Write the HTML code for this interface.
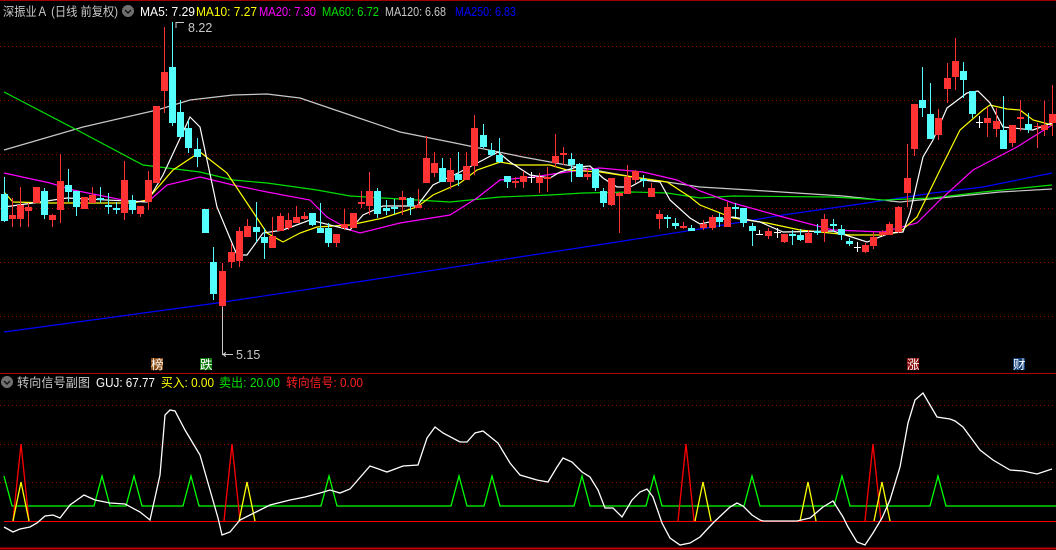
<!DOCTYPE html>
<html><head><meta charset="utf-8"><style>
html,body{margin:0;padding:0;background:#000;width:1056px;height:550px;overflow:hidden}
svg{display:block}
text{font-family:"Liberation Sans","Noto Sans CJK SC",sans-serif;font-size:12.5px}
</style></head><body>
<svg width="1056" height="550" viewBox="0 0 1056 550" xmlns="http://www.w3.org/2000/svg" shape-rendering="crispEdges">
<rect width="1056" height="550" fill="#000"/>
<line x1="0" y1="0.5" x2="1056" y2="0.5" stroke="#a00000"/>
<g stroke="#a00000" stroke-dasharray="1,3">
<line x1="0" y1="46.5" x2="1056" y2="46.5"/><line x1="0" y1="100.5" x2="1056" y2="100.5"/>
<line x1="0" y1="154.5" x2="1056" y2="154.5"/><line x1="0" y1="208.5" x2="1056" y2="208.5"/>
<line x1="0" y1="262.5" x2="1056" y2="262.5"/><line x1="0" y1="316.5" x2="1056" y2="316.5"/>
<line x1="0" y1="405.5" x2="1056" y2="405.5"/><line x1="0" y1="444.5" x2="1056" y2="444.5"/>
<line x1="0" y1="482.5" x2="1056" y2="482.5"/>
</g>
<g fill="none" stroke-width="1.2" shape-rendering="auto">
<polyline stroke="#c8c8c8" points="4,150 83,127 157,110 190,100 233,95 267,94 300,98 350,115 400,132 450,142 523,157 583,168 633,177 667,182 700,187 750,190 843,196 900,202 950,197 1000,192 1052,189"/>
<polyline stroke="#0000ff" points="4,332 217,303 350,283 370,280 617,242 700,229 783,215 867,203 933,193 983,187 1052,173"/>
<polyline stroke="#00e000" points="4,92 77,130 143,165 200,172 233,180 267,183 317,190 350,196 400,199 450,202 500,197 550,195 583,193 633,192 667,193 700,198 733,196 833,197 883,200 933,198 983,192 1052,185"/>
<polyline stroke="#ff00ff" points="4,173 50,183 73,190 133,202 150,200 167,185 200,177 233,185 267,192 310,200 327,217 350,230 360,233 400,223 450,215 477,198 500,180 533,177 567,172 600,168 643,172 677,180 700,191 733,203 783,217 833,230 883,232 917,223 940,200 973,170 1017,147 1052,125"/>
<polyline stroke="#ffff00" points="4,192 13,202 50,203 133,203 147,200 173,170 200,152 227,173 247,203 267,233 283,242 300,233 317,227 350,225 383,218 417,207 433,195 460,183 477,170 500,162 517,165 550,165 567,170 600,172 633,177 667,182 690,197 700,205 733,218 767,223 800,230 850,235 883,235 900,232 917,217 940,170 960,130 983,110 990,105 1007,109 1020,110 1033,120 1052,125"/>
<polyline stroke="#ffffff" points="4,207 33,203 67,198 147,202 163,175 190,117 200,127 217,207 237,255 247,255 263,233 283,230 310,220 350,230 363,215 383,206 417,206 433,185 460,172 483,160 498,152 510,162 530,175 550,178 560,172 577,167 590,166 603,178 617,187 630,187 643,180 660,182 670,200 690,218 700,224 733,217 760,222 783,232 833,231 867,242 890,233 903,232 910,213 923,157 933,140 947,108 967,93 978,91 990,103 1003,127 1033,130 1052,123"/>
</g>
<path stroke="#ff3333" fill="none" d="M12.5 198V227M20.5 187V227M28.5 203V227M36.5 187V203M52.5 214V227M60.5 154V223M84.5 197V209M92.5 187V203M124.5 161V220M140.5 206V217M148.5 171V210M156.5 106V183M164.5 27V113M222.5 263V353M231.5 243V268M239.5 227V267M247.5 219V237M272.5 217V248M280.5 213V231M288.5 213V230M296.5 206V223M304.5 212V220M336.5 234V247M344.5 209V230M353.5 213V228M361.5 191V208M369.5 172V215M402.5 191V215M418.5 189V208M426.5 136V183M434.5 152V177M450.5 158V189M466.5 152V180M474.5 115V175M515.5 177V188M523.5 171V188M539.5 173V193M547.5 167V192M555.5 134V167M563.5 147V165M587.5 168V180M611.5 178V206M619.5 192V233M627.5 165V194M635.5 170V183M651.5 183V197M659.5 210V229M683.5 222V229M703.5 220V230M712.5 215V230M727.5 202V227M768.5 228V239M784.5 234V243M808.5 230V243M824.5 214V242M865.5 243V253M873.5 232V249M882.5 230V236M889.5 222V235M898.5 206V233M907.5 144V207M914.5 104V156M938.5 109V140M947.5 63V103M955.5 38V90M987.5 107V137M996.5 108V137M1012.5 125V147M1020.5 100V131M1037.5 123V148M1044.5 101V136M1052.5 85V136"/>
<path fill="#ff3333" d="M9 215h7v4h-7zM17 205h7v14h-7zM25 207h7v4h-7zM33 187h7v16h-7zM49 215h7v5h-7zM57 181h7v29h-7zM81 197h7v12h-7zM89 195h7v8h-7zM121 180h7v33h-7zM137 206h7v8h-7zM145 180h7v22h-7zM153 106h7v77h-7zM161 72h7v19h-7zM219 271h7v35h-7zM228 252h7v10h-7zM236 231h7v30h-7zM244 226h7v11h-7zM269 236h7v12h-7zM277 216h7v15h-7zM285 220h7v8h-7zM293 217h7v6h-7zM301 216h7v3h-7zM333 234h7v9h-7zM341 224h7v4h-7zM350 213h7v15h-7zM358 202h7v2h-7zM366 191h7v15h-7zM399 197h7v3h-7zM415 205h7v3h-7zM423 158h7v25h-7zM431 163h7v10h-7zM447 170h7v12h-7zM463 166h7v14h-7zM471 128h7v38h-7zM512 181h7v2h-7zM520 176h7v6h-7zM536 177h7v6h-7zM544 177h7v2h-7zM552 156h7v7h-7zM560 153h7v2h-7zM584 174h7v3h-7zM608 178h7v27h-7zM616 193h7v3h-7zM624 177h7v17h-7zM632 171h7v9h-7zM648 188h7v9h-7zM656 214h7v5h-7zM680 226h7v2h-7zM700 224h7v4h-7zM709 217h7v11h-7zM724 207h7v20h-7zM765 231h7v5h-7zM781 234h7v8h-7zM805 233h7v10h-7zM821 219h7v13h-7zM862 245h7v7h-7zM870 237h7v9h-7zM879 232h7v3h-7zM886 224h7v11h-7zM895 207h7v25h-7zM904 178h7v15h-7zM911 104h7v45h-7zM935 118h7v17h-7zM944 78h7v11h-7zM952 61h7v16h-7zM984 118h7v5h-7zM993 121h7v8h-7zM1009 125h7v18h-7zM1017 117h7v2h-7zM1034 126h7v1h-7zM1041 125h7v5h-7zM1049 114h7v9h-7z"/>
<path stroke="#54ffff" fill="none" d="M4.5 177V222M44.5 188V219M68.5 169V202M76.5 191V216M100.5 187V203M108.5 193V214M116.5 202V214M132.5 195V214M172.5 22V126M180.5 100V137M188.5 120V153M197.5 138V167M205.5 209V233M213.5 247V300M256.5 202V242M264.5 228V259M312.5 213V226M320.5 203V233M328.5 223V247M377.5 188V218M386.5 200V215M394.5 199V214M410.5 197V215M442.5 158V182M458.5 152V186M483.5 124V148M491.5 143V156M499.5 138V163M507.5 176V188M571.5 153V182M579.5 163V177M595.5 169V191M603.5 188V207M643.5 175V187M667.5 215V228M675.5 218V229M691.5 225V231M719.5 213V227M735.5 203V217M743.5 208V227M752.5 223V246M792.5 230V245M800.5 229V241M817.5 224V235M833.5 219V232M841.5 225V240M849.5 238V246M922.5 67V117M930.5 83V139M963.5 62V98M972.5 91V118M1003.5 96V149M1028.5 113V133"/>
<path fill="#54ffff" d="M1 194h7v27h-7zM41 191h7v24h-7zM65 185h7v7h-7zM73 191h7v16h-7zM97 198h7v2h-7zM105 205h7v2h-7zM113 208h7v2h-7zM129 200h7v10h-7zM169 67h7v56h-7zM177 112h7v25h-7zM185 128h7v20h-7zM194 149h7v8h-7zM202 209h7v24h-7zM210 262h7v32h-7zM253 227h7v5h-7zM261 237h7v6h-7zM309 213h7v12h-7zM317 228h7v5h-7zM325 228h7v15h-7zM374 191h7v23h-7zM383 208h7v3h-7zM391 207h7v2h-7zM407 198h7v8h-7zM439 168h7v14h-7zM455 174h7v6h-7zM480 135h7v12h-7zM488 150h7v5h-7zM496 155h7v7h-7zM504 176h7v6h-7zM568 159h7v6h-7zM576 164h7v13h-7zM592 169h7v19h-7zM600 191h7v12h-7zM640 179h7v2h-7zM664 217h7v2h-7zM672 223h7v3h-7zM688 228h7v3h-7zM716 217h7v5h-7zM732 207h7v2h-7zM740 208h7v15h-7zM749 226h7v5h-7zM789 234h7v2h-7zM797 235h7v5h-7zM814 231h7v2h-7zM830 224h7v2h-7zM838 229h7v6h-7zM846 241h7v3h-7zM919 100h7v8h-7zM927 114h7v25h-7zM960 71h7v9h-7zM969 91h7v23h-7zM1000 130h7v19h-7zM1025 124h7v6h-7z"/>
<path stroke="#ffffff" fill="none" d="M528 177.5h7M531.5 172V183M756 234.5h7M759.5 230V235M774 232.5h7M777.5 228V238M854 247.5h7M857.5 242V252M976 122.5h7M979.5 116V128"/>
<path stroke="#c8c8c8" fill="none" d="M176 22V28M176 22.5h8M222.5 307V355M223 354.5h10M223 354.5l3-2M223 354.5l3 2"/>
<text x="188" y="32" fill="#c8c8c8">8.22</text>
<text x="236" y="359" fill="#c8c8c8">5.15</text>
<rect x="151" y="358" width="12" height="12" fill="#8b4a10"/><text x="151" y="369" fill="#fff" font-size="11">榜</text>
<rect x="200" y="358" width="12" height="12" fill="#0e7a0e"/><text x="200" y="369" fill="#fff" font-size="11">跌</text>
<rect x="907" y="358" width="12" height="12" fill="#8a0c0c"/><text x="907" y="369" fill="#fff" font-size="11">涨</text>
<rect x="1013" y="358" width="12" height="12" fill="#123e78"/><text x="1013" y="369" fill="#fff" font-size="11">财</text>
<text x="3" y="16" fill="#c8c8c8" textLength="115" lengthAdjust="spacingAndGlyphs">深振业Ａ (日线 前复权)</text>
<circle cx="128" cy="11" r="6" fill="#707070"/>
<path d="M125 10l3 3 3-3" stroke="#111" fill="none" stroke-width="1.4" shape-rendering="auto"/>
<text x="140" y="16" fill="#fff" textLength="55" lengthAdjust="spacingAndGlyphs">MA5: 7.29</text>
<text x="196" y="16" fill="#ffff00" textLength="61" lengthAdjust="spacingAndGlyphs">MA10: 7.27</text>
<text x="259" y="16" fill="#ff00ff" textLength="57" lengthAdjust="spacingAndGlyphs">MA20: 7.30</text>
<text x="322" y="16" fill="#00e000" textLength="57" lengthAdjust="spacingAndGlyphs">MA60: 6.72</text>
<text x="385" y="16" fill="#c8c8c8" textLength="61" lengthAdjust="spacingAndGlyphs">MA120: 6.68</text>
<text x="455" y="16" fill="#0000ff" textLength="61" lengthAdjust="spacingAndGlyphs">MA250: 6.83</text>
<line x1="0" y1="373.5" x2="1056" y2="373.5" stroke="#b00000"/>
<circle cx="7" cy="382" r="6" fill="#707070"/>
<path d="M4 381l3 3 3-3" stroke="#111" fill="none" stroke-width="1.4" shape-rendering="auto"/>
<text x="17" y="387" fill="#c8c8c8" textLength="73" lengthAdjust="spacingAndGlyphs">转向信号副图</text>
<text x="96" y="387" fill="#fff" textLength="59" lengthAdjust="spacingAndGlyphs">GUJ: 67.77</text>
<text x="161" y="387" fill="#ffff00" textLength="53" lengthAdjust="spacingAndGlyphs">买入: 0.00</text>
<text x="219" y="387" fill="#00e000" textLength="61" lengthAdjust="spacingAndGlyphs">卖出: 20.00</text>
<text x="286" y="387" fill="#ff2020" textLength="77" lengthAdjust="spacingAndGlyphs">转向信号: 0.00</text>
<line x1="4" y1="521.5" x2="1056" y2="521.5" stroke="#ff0000"/>
<line x1="0" y1="548.5" x2="1056" y2="548.5" stroke="#c00000" stroke-width="2"/>
<g fill="none" stroke-width="1.3" shape-rendering="auto">
<polyline stroke="#00ff00" points="4,476 12,506 94,506 102,476 110,506 126,506 134,476 142,506 183,506 191,476 199,506 321,506 329,476 337,506 451,506 459,476 467,506 484,506 492,476 500,506 574,506 582,476 590,506 646,506 654,476 662,506 744,506 752,476 760,506 834,506 842,476 850,506 930,506 938,476 946,506 1056,506"/>
<polyline stroke="#ff0000" points="13,521 21,444 29,521"/>
<polyline stroke="#ff0000" points="224,521 232,444 240,521"/>
<polyline stroke="#ff0000" points="678,521 686,444 694,521"/>
<polyline stroke="#ff0000" points="865,521 873,444 881,521"/>
<polyline stroke="#ffff00" points="13,521 21,482 29,521"/>
<polyline stroke="#ffff00" points="239,521 247,482 255,521"/>
<polyline stroke="#ffff00" points="695,521 703,482 711,521"/>
<polyline stroke="#ffff00" points="800,521 808,482 816,521"/>
<polyline stroke="#ffff00" points="874,521 882,482 890,521"/>
<polyline stroke="#ffffff" points="4,527 13,532 20,529 30,527 37,523 45,516 53,515 60,518 70,505 84,495 95,500 110,503 125,504 140,512 150,520 160,475 165,415 170,410 175,411 185,430 200,455 210,490 218,518 222,535 230,532 240,520 250,515 260,510 270,505 290,500 305,497 320,493 330,490 340,493 350,489 370,466 387,472 403,466 418,465 427,438 435,427 443,433 460,442 467,442 475,433 483,431 498,443 510,463 520,475 537,480 548,482 557,467 563,458 572,462 582,472 590,477 598,490 605,508 613,508 622,517 632,500 640,492 647,489 653,497 662,523 670,538 680,545 690,543 700,537 713,523 730,507 737,503 743,506 752,515 760,520 763,521 797,521 810,518 823,507 833,501 843,517 848,527 857,542 865,545 873,533 882,518 890,500 900,467 908,423 915,400 923,393 930,405 937,417 950,419 955,421 963,427 980,450 993,460 1010,470 1023,471 1037,474 1052,469"/>
</g>
</svg>
</body></html>
